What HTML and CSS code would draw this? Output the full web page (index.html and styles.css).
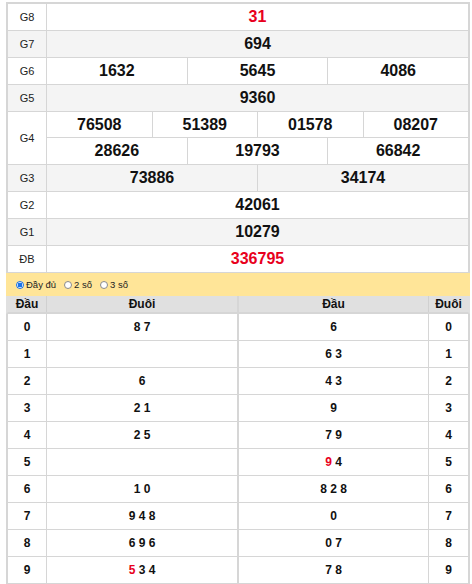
FILE: index.html
```html
<!DOCTYPE html>
<html lang="vi">
<head>
<meta charset="utf-8">
<title>Kết quả xổ số</title>
<link rel="stylesheet" href="styles.css">
</head>
<body>
<div class="page">
  <div class="kq">
    <div class="row"><div class="lbl">G8</div><div class="vals"><div class="v red">31</div></div></div>
    <div class="row alt"><div class="lbl">G7</div><div class="vals"><div class="v">694</div></div></div>
    <div class="row"><div class="lbl">G6</div><div class="vals"><div class="v">1632</div><div class="v">5645</div><div class="v">4086</div></div></div>
    <div class="row alt"><div class="lbl">G5</div><div class="vals"><div class="v">9360</div></div></div>
    <div class="row"><div class="lbl">G4</div>
      <div class="stack">
        <div class="vals sub"><div class="v">76508</div><div class="v">51389</div><div class="v">01578</div><div class="v">08207</div></div>
        <div class="vals"><div class="v">28626</div><div class="v">19793</div><div class="v">66842</div></div>
      </div>
    </div>
    <div class="row alt"><div class="lbl">G3</div><div class="vals"><div class="v">73886</div><div class="v">34174</div></div></div>
    <div class="row"><div class="lbl">G2</div><div class="vals"><div class="v">42061</div></div></div>
    <div class="row alt"><div class="lbl">G1</div><div class="vals"><div class="v">10279</div></div></div>
    <div class="row"><div class="lbl">ĐB</div><div class="vals"><div class="v red">336795</div></div></div>
  </div>

  <div class="opts">
    <label class="opt"><span class="radio on"></span>Đầy đủ</label>
    <label class="opt"><span class="radio"></span>2 số</label>
    <label class="opt"><span class="radio"></span>3 số</label>
  </div>

  <div class="lt">
    <div class="lrow head"><div class="c c1">Đầu</div><div class="c c2">Đuôi</div><div class="c c3">Đầu</div><div class="c c4">Đuôi</div></div>
    <div class="lrow"><div class="c c1">0</div><div class="c c2">8 7</div><div class="c c3">6</div><div class="c c4">0</div></div>
    <div class="lrow"><div class="c c1">1</div><div class="c c2"></div><div class="c c3">6 3</div><div class="c c4">1</div></div>
    <div class="lrow"><div class="c c1">2</div><div class="c c2">6</div><div class="c c3">4 3</div><div class="c c4">2</div></div>
    <div class="lrow"><div class="c c1">3</div><div class="c c2">2 1</div><div class="c c3">9</div><div class="c c4">3</div></div>
    <div class="lrow"><div class="c c1">4</div><div class="c c2">2 5</div><div class="c c3">7 9</div><div class="c c4">4</div></div>
    <div class="lrow"><div class="c c1">5</div><div class="c c2"></div><div class="c c3"><span><span class="red">9</span> 4</span></div><div class="c c4">5</div></div>
    <div class="lrow"><div class="c c1">6</div><div class="c c2">1 0</div><div class="c c3">8 2 8</div><div class="c c4">6</div></div>
    <div class="lrow"><div class="c c1">7</div><div class="c c2">9 4 8</div><div class="c c3">0</div><div class="c c4">7</div></div>
    <div class="lrow"><div class="c c1">8</div><div class="c c2">6 9 6</div><div class="c c3">0 7</div><div class="c c4">8</div></div>
    <div class="lrow"><div class="c c1">9</div><div class="c c2"><span><span class="red">5</span> 3 4</span></div><div class="c c3">7 8</div><div class="c c4">9</div></div>
  </div>
</div>
</body>
</html>
```
FILE: styles.css
```css
* { box-sizing: border-box; }
html, body { margin: 0; padding: 0; background: #fff; }
body { font-family: "Liberation Sans", Arial, sans-serif; color: #000; }
.page { padding: 2px 0 0 6px; width: 470px; }

.kq {
  width: 464px;
  border: 2px solid #d6d6d6;
  border-bottom: none;
}
.row {
  display: flex;
  border-bottom: 1px solid #d6d6d6;
  background: #fff;
}
.row.alt { background: #f4f4f4; }
.lbl {
  width: 39px;
  flex: none;
  border-right: 1px solid #d6d6d6;
  display: flex;
  align-items: center;
  justify-content: center;
  font-size: 11px;
  color: #222;
}
.stack { flex: 1; display: flex; flex-direction: column; }
.vals { flex: 1; display: flex; height: 26px; }
.vals.sub { border-bottom: 1px solid #d6d6d6; flex: none; }
.stack .vals { height: 26px; flex: none; }
.v {
  flex: 1 1 0;
  display: flex;
  align-items: center;
  justify-content: center;
  font-size: 16px;
  font-weight: bold;
  color: #111;
}
.v + .v { border-left: 1px solid #d6d6d6; }
.red { color: #e8001c; }
.v.red { color: #e8001c; }

.opts {
  width: 464px;
  height: 23px;
  background: #ffe598;
  display: flex;
  align-items: center;
  padding-left: 10px;
  gap: 8px;
  font-size: 9.5px;
  color: #222;
}
.opt { display: flex; align-items: center; gap: 2px; }
.radio {
  width: 8px; height: 8px;
  border-radius: 50%;
  border: 1px solid #8a8a8a;
  background: #fff;
  display: inline-block;
}
.radio.on {
  border: 1px solid #1a73e8;
  background: radial-gradient(circle, #1a73e8 0 2.2px, #fff 2.6px 3px, #1a73e8 3.4px);
}

.lt { width: 464px; }
.lrow {
  display: flex;
  height: 27px;
  border-left: 2px solid #d6d6d6;
  border-right: 2px solid #d6d6d6;
  border-bottom: 1px solid #d6d6d6;
}
.lrow.head {
  height: 18px;
  background: #e0e0e0;
  border-left-color: #e0e0e0;
  border-right-color: #e0e0e0;
  border-bottom: 2px solid #d6d6d6;
}
.c {
  display: flex;
  align-items: center;
  justify-content: center;
  font-size: 12px;
  font-weight: bold;
  color: #111;
  flex: none;
}
.c1 { width: 39px; border-right: 1px solid #d6d6d6; }
.c2 { width: 192px; border-right: 2px solid #d6d6d6; }
.c3 { width: 190px; border-right: 1px solid #d6d6d6; }
.c4 { width: 39px; }
.head .c1, .head .c3 { border-right-color: #d0d0d0; }
```
